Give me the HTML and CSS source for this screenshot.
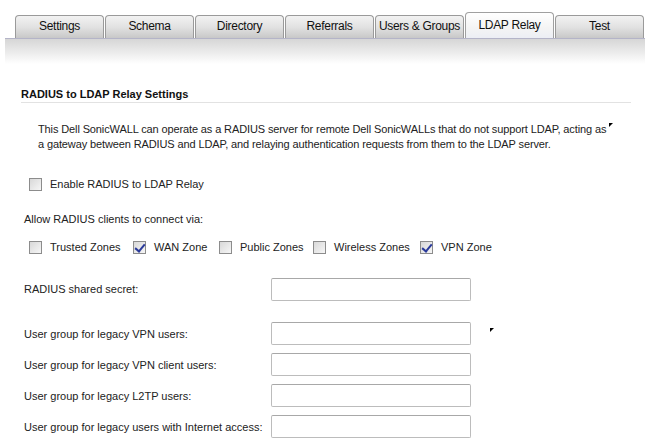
FILE: index.html
```html
<!DOCTYPE html>
<html>
<head>
<meta charset="utf-8">
<link rel="stylesheet" href="styles.css">
</head>
<body>
<div class="tabs">
  <div class="tab">Settings</div>
  <div class="tab">Schema</div>
  <div class="tab">Directory</div>
  <div class="tab">Referrals</div>
  <div class="tab">Users &amp; Groups</div>
  <div class="tab active">LDAP Relay</div>
  <div class="tab">Test</div>
</div>
<div class="band"></div>
<div class="content">
  <h2 class="heading">RADIUS to LDAP Relay Settings</h2>
  <div class="desc-row">
    <p class="desc">This Dell SonicWALL can operate as a RADIUS server for remote Dell SonicWALLs that do not support LDAP, acting as<br>a gateway between RADIUS and LDAP, and relaying authentication requests from them to the LDAP server.</p>
    <span class="mark mark1"></span>
  </div>
  <label class="check enable"><span class="box"></span>Enable RADIUS to LDAP Relay</label>
  <div class="allow">Allow RADIUS clients to connect via:</div>
  <div class="zones">
    <label class="check z1"><span class="box"></span>Trusted Zones</label>
    <label class="check z2"><span class="box checked"></span>WAN Zone</label>
    <label class="check z3"><span class="box"></span>Public Zones</label>
    <label class="check z4"><span class="box"></span>Wireless Zones</label>
    <label class="check"><span class="box checked"></span>VPN Zone</label>
  </div>
  <div class="row secret">
    <span class="lbl">RADIUS shared secret:</span>
    <span class="input"></span>
  </div>
  <div class="groups">
    <div class="row">
      <span class="lbl">User group for legacy VPN users:</span>
      <span class="input"></span>
      <span class="mark mark2"></span>
    </div>
    <div class="row">
      <span class="lbl">User group for legacy VPN client users:</span>
      <span class="input"></span>
    </div>
    <div class="row">
      <span class="lbl">User group for legacy L2TP users:</span>
      <span class="input"></span>
    </div>
    <div class="row">
      <span class="lbl">User group for legacy users with Internet access:</span>
      <span class="input"></span>
    </div>
  </div>
</div>
</body>
</html>
```

FILE: styles.css
```css
* { box-sizing: border-box; }
body {
  margin: 0;
  background: #fff;
  font-family: "Liberation Sans", Arial, sans-serif;
  font-size: 11px;
  color: #222;
  width: 653px;
  height: 448px;
  overflow: hidden;
}
.tabs {
  display: flex;
  align-items: flex-end;
  gap: 1px;
  padding-left: 15px;
  height: 38px;
}
.tab {
  width: 89px;
  height: 23px;
  border: 1px solid #9a9a9a;
  border-bottom: none;
  border-radius: 4px 4px 0 0;
  background: linear-gradient(#f2f2f2, #e2e2e2 50%, #c8c8c8);
  text-align: center;
  line-height: 21px;
  font-size: 12px;
  letter-spacing: -0.3px;
  color: #111;
  white-space: nowrap;
}
.tab.active {
  height: 26px;
  line-height: 24px;
  background: linear-gradient(#ffffff, #f4f4f4 60%, #eceef4);
  border-color: #a0a0a0;
}
.band {
  margin: 0 8px 0 5px;
  height: 26px;
  border-top: 1px solid #b4b4c8;
  background: linear-gradient(#d6d6d6, #ececec 55%, #ffffff);
}
.content {
  padding: 0 0 0 21px;
}
.heading {
  margin: 24px 22px 0 0;
  padding-bottom: 1px;
  border-bottom: 1px solid #e2e2e2;
  font-size: 11px;
  font-weight: bold;
  color: #111;
  line-height: 13px;
}
.desc-row {
  display: flex;
  align-items: flex-start;
  margin-top: 19px;
}
.desc {
  margin: 0 0 0 17px;
  width: 576px;
  line-height: 15px;
  letter-spacing: -0.12px;
  white-space: nowrap;
}
.mark {
  width: 0;
  height: 0;
  border-top: 4px solid #000;
  border-right: 4px solid transparent;
  display: inline-block;
}
.mark1 { margin: 1px 0 0 -5px; }
.check {
  display: flex;
  align-items: center;
  line-height: 14px;
}
.box {
  width: 13px;
  height: 13px;
  border: 1px solid #8c8c8c;
  background: linear-gradient(135deg, #d8d8d8, #f6f6f6);
  margin-right: 8px;
  position: relative;
  flex: none;
}
.box.checked::after {
  content: "";
  position: absolute;
  left: 3px;
  top: 0px;
  width: 4px;
  height: 8px;
  border-right: 2px solid #2a3a9a;
  border-bottom: 2px solid #2a3a9a;
  transform: rotate(40deg);
}
.enable {
  margin: 25px 0 0 8px;
}
.allow {
  margin: 21px 0 0 3px;
  line-height: 14px;
}
.zones {
  display: flex;
  margin: 14px 0 0 8px;
}
.z1 { width: 104px; }
.z2 { width: 86px; }
.z3 { width: 94px; }
.z4 { width: 107px; }
.row {
  display: flex;
  align-items: center;
  height: 22px;
}
.lbl {
  width: 250px;
  padding-left: 3px;
}
.input {
  width: 200px;
  height: 23px;
  border: 1px solid #bcbcbc;
  border-top-color: #a8a8a8;
  border-radius: 2px;
  background: #fff;
}
.secret {
  margin-top: 24px;
}
.groups {
  display: flex;
  flex-direction: column;
  gap: 8px;
  margin-top: 22px;
}
.groups .row { height: 23px; }
.mark2 { margin: -8px 0 0 19px; }
```
